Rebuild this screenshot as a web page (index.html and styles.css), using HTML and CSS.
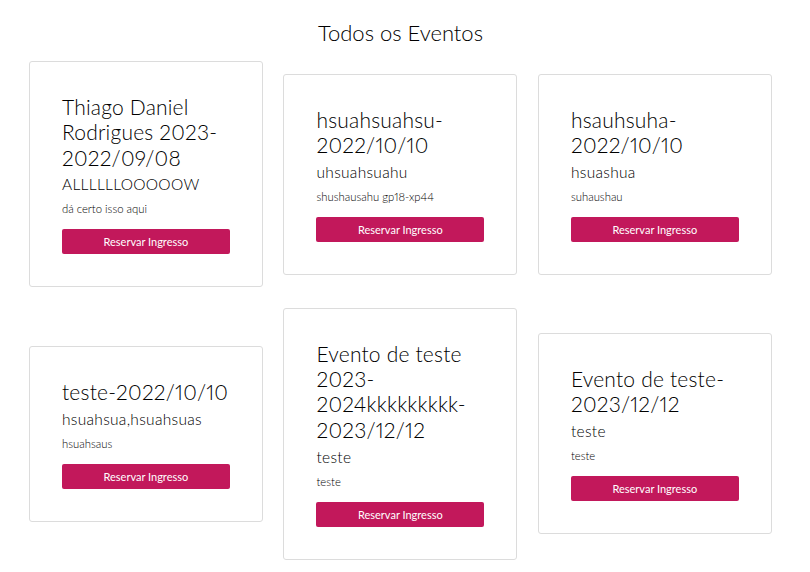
FILE: index.html
```html
<!DOCTYPE html>
<html lang="pt-BR">
<head>
<meta charset="utf-8">
<title>Todos os Eventos</title>
<link rel="stylesheet" href="styles.css">
</head>
<body>
<main class="page">
  <h1 class="page-title">Todos os Eventos</h1>
  <div class="grid">
    <div class="card">
      <h2 class="card-title">Thiago Daniel Rodrigues 2023-2022/09/08</h2>
      <p class="card-sub">ALLLLLLOOOOOW</p>
      <p class="card-text">dá certo isso aqui</p>
      <a class="btn">Reservar Ingresso</a>
    </div>
    <div class="card">
      <h2 class="card-title">hsuahsuahsu-2022/10/10</h2>
      <p class="card-sub">uhsuahsuahu</p>
      <p class="card-text">shushausahu gp18-xp44</p>
      <a class="btn">Reservar Ingresso</a>
    </div>
    <div class="card">
      <h2 class="card-title">hsauhsuha-2022/10/10</h2>
      <p class="card-sub">hsuashua</p>
      <p class="card-text">suhaushau</p>
      <a class="btn">Reservar Ingresso</a>
    </div>
    <div class="card">
      <h2 class="card-title">teste-2022/10/10</h2>
      <p class="card-sub">hsuahsua,hsuahsuas</p>
      <p class="card-text">hsuahsaus</p>
      <a class="btn">Reservar Ingresso</a>
    </div>
    <div class="card">
      <h2 class="card-title">Evento de teste 2023-2024kkkkkkkkk-2023/12/12</h2>
      <p class="card-sub">teste</p>
      <p class="card-text">teste</p>
      <a class="btn">Reservar Ingresso</a>
    </div>
    <div class="card">
      <h2 class="card-title">Evento de teste-2023/12/12</h2>
      <p class="card-sub">teste</p>
      <p class="card-text">teste</p>
      <a class="btn">Reservar Ingresso</a>
    </div>
  </div>
</main>
</body>
</html>
```

FILE: styles.css
```css
* { box-sizing: border-box; }
html, body { margin: 0; padding: 0; background: #fff; }
body {
  font-family: "Lato", "Noto Sans", sans-serif;
  color: #212529;
  font-variant-numeric: proportional-nums;
}
.page {
  padding: 19px 38px 0 29px;
}
.page-title {
  margin: 0 0 14px;
  text-align: center;
  font-size: 22px;
  line-height: 28px;
  font-weight: 300;
  color: #000;
}
.grid {
  display: grid;
  grid-template-columns: repeat(3, 233.7px);
  column-gap: 20.8px;
  row-gap: 20.5px;
  align-items: center;
}
.card {
  border: 1px solid #dcdcdc;
  border-radius: 3px;
  padding: 32px;
  display: flex;
  flex-direction: column;
}
.card-title {
  margin: 0 0 5.5px;
  font-size: 21px;
  line-height: 25.3px;
  font-weight: 300;
  letter-spacing: 0.2px;
  color: #000;
}
.card-sub {
  margin: 0 0 7px;
  font-size: 15.5px;
  line-height: 19px;
  font-weight: 300;
  letter-spacing: 0.3px;
  color: #000;
}
.card-text {
  margin: 0 0 12px;
  font-size: 11.3px;
  line-height: 16px;
  font-weight: 300;
  color: #000;
}
.btn {
  display: block;
  height: 25px;
  line-height: 25px;
  background: #c2185b;
  color: #fff;
  text-align: center;
  font-size: 11px;
  font-weight: 400;
  border-radius: 2px;
}
```
